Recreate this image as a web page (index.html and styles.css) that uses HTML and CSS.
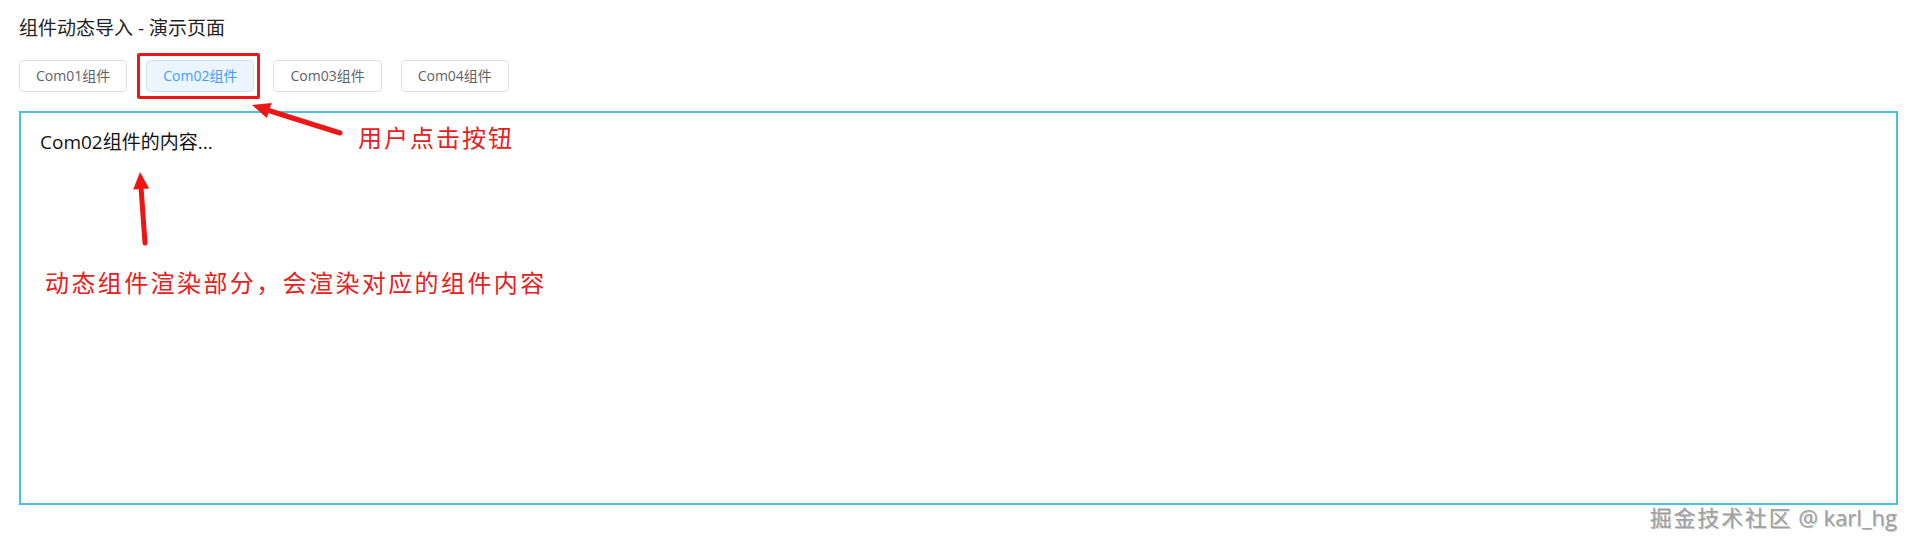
FILE: index.html
```html
<!DOCTYPE html>
<html lang="zh-CN">
<head>
<meta charset="utf-8">
<title>组件动态导入 - 演示页面</title>
<link rel="stylesheet" href="styles.css">
</head>
<body>
<div class="page">
  <h1 class="title">组件动态导入 - 演示页面</h1>
  <div class="toolbar">
    <button class="btn">Com01组件</button>
    <button class="btn btn-active">Com02组件<span class="highlight"></span></button>
    <button class="btn">Com03组件</button>
    <button class="btn">Com04组件</button>
  </div>
  <div class="panel">
    <p class="panel-text">Com02组件的内容...</p>
  </div>

  <svg class="arrows" width="1917" height="555" viewBox="0 0 1917 555">
    <line x1="267" y1="110" x2="340" y2="133" class="arrow-line"/>
    <polygon points="252,105 271.6,102.9 266.8,118.1" class="arrow-head"/>
    <line x1="141" y1="187" x2="145" y2="243" class="arrow-line"/>
    <polygon points="140,172 133.2,189.6 149.2,188.4" class="arrow-head"/>
  </svg>
  <div class="note note-click">用户点击按钮</div>
  <div class="note note-render">动态组件渲染部分，会渲染对应的组件内容</div>
  <div class="watermark"><span class="wm-cjk">掘金技术社区</span> @ karl_hg</div>
</div>
</body>
</html>
```
FILE: styles.css
```css
html, body {
  margin: 0;
  padding: 0;
  background: #ffffff;
}

.page {
  position: relative;
  width: 1917px;
  height: 555px;
  box-sizing: border-box;
  padding: 15px 19px 0 19px;
  font-family: "Open Sans", "Noto Sans CJK SC", sans-serif;
}

.title {
  margin: 0;
  font-size: 19px;
  line-height: 26px;
  font-weight: normal;
  color: #222222;
}

.toolbar {
  display: flex;
  gap: 19px;
  margin-top: 19px;
}

.btn {
  position: relative;
  height: 32px;
  padding: 0 16px;
  box-sizing: border-box;
  border: 1px solid #dcdfe6;
  border-radius: 4px;
  background: #ffffff;
  color: #606266;
  font-family: "Open Sans", "Noto Sans CJK SC", sans-serif;
  font-size: 14px;
  line-height: 30px;
}

.btn-active {
  background: #ecf5ff;
  border-color: #c6e2ff;
  color: #409eff;
}

.highlight {
  position: absolute;
  top: -8px;
  left: -10px;
  right: -7px;
  bottom: -8px;
  border: 3px solid #f01515;
  border-radius: 2px;
}

.panel {
  margin-top: 19px;
  height: 394px;
  box-sizing: border-box;
  border: 2px solid #4cbfe4;
  padding: 16px 19px;
}

.panel-text {
  margin: 0;
  font-size: 19px;
  line-height: 26px;
  color: #111111;
}

.arrows {
  position: absolute;
  top: 0;
  left: 0;
  pointer-events: none;
}

.arrow-line {
  stroke: #f01515;
  stroke-width: 5;
  stroke-linecap: round;
}

.arrow-head {
  fill: #f01515;
}

.note {
  position: absolute;
  font-family: "Noto Sans CJK SC", sans-serif;
  font-size: 24px;
  line-height: 24px;
  letter-spacing: 2px;
  color: #e8201c;
  white-space: nowrap;
}

.note-click {
  top: 125px;
  left: 358px;
}

.note-render {
  top: 270px;
  left: 45px;
  letter-spacing: 2.4px;
}

.watermark {
  position: absolute;
  top: 506px;
  right: 20px;
  font-family: "Open Sans", "Noto Sans CJK SC", sans-serif;
  font-size: 22px;
  line-height: 22px;
  color: #a0a0a0;
  white-space: nowrap;
  text-shadow: 1px 1px 0 rgba(0, 0, 0, 0.22), -1px -1px 0 rgba(255, 255, 255, 0.9);
}

.wm-cjk {
  letter-spacing: 1.8px;
}
```
